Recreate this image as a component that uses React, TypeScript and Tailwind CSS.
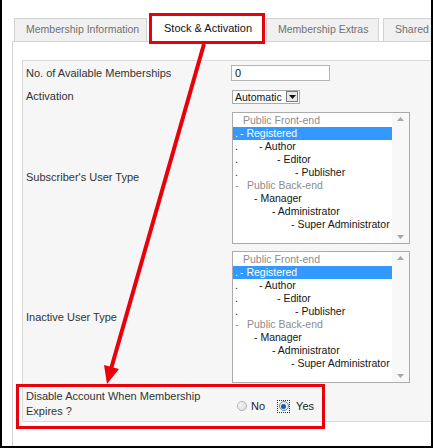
import React from "react";
import clsx from "clsx";

type Item = {
  pre?: string;
  text: string;
  pad: string;
  muted?: boolean;
  selected?: boolean;
};

const groups: Item[] = [
  { text: "Public Front-end", pad: "w-[10px]", muted: true },
  { pre: ".", text: "- Registered", pad: "w-[7px]", selected: true },
  { pre: ".", text: "- Author", pad: "w-[26px]" },
  { pre: ".", text: "- Editor", pad: "w-[44px]" },
  { pre: ".", text: "- Publisher", pad: "w-[62px]" },
  { pre: "-", text: "Public Back-end", pad: "w-[14px]", muted: true },
  { text: "- Manager", pad: "w-[21px]" },
  { text: "- Administrator", pad: "w-[39px]" },
  { text: "- Super Administrator", pad: "w-[58px]" },
];

const tabs = [
  { label: "Membership Information", cls: "w-[133px]" },
  { label: "Stock & Activation", cls: "ml-[2px] w-[116px]", active: true },
  { label: "Membership Extras", cls: "ml-[1px] w-[113px]" },
  { label: "Shared", cls: "ml-[4px] w-[70px]" },
];

function UserList() {
  return (
    <div className="ml-[1px] flex h-[132px] w-[178px] border border-[#ababab] bg-white">
      <div className="flex-1 pt-[1px] text-[10.5px] leading-[13px]">
        {groups.map((g) => (
          <div
            key={g.text}
            className={clsx(
              "flex h-[13px] whitespace-pre",
              g.selected
                ? "bg-[#3399ff] text-white"
                : g.muted
                ? "text-[#8c8c8c]"
                : "text-[#151515]"
            )}
          >
            <span className={clsx(g.pad, "shrink-0 pl-[2px]")}>{g.pre}</span>
            <span>{g.text}</span>
          </div>
        ))}
      </div>
      <div className="flex w-[17px] flex-col items-center justify-between bg-[#f8f8f8] py-[4px]">
        <svg width="7" height="4" viewBox="0 0 7 4">
          <path d="M0 4 L3.5 0 L7 4 Z" fill="#a8a8a8" />
        </svg>
        <svg width="7" height="4" viewBox="0 0 7 4">
          <path d="M0 0 L3.5 4 L7 0 Z" fill="#a8a8a8" />
        </svg>
      </div>
    </div>
  );
}

function Row({
  h,
  label,
  children,
}: {
  h: string;
  label: React.ReactNode;
  children: React.ReactNode;
}) {
  return (
    <div className={clsx("grid grid-cols-[208px_1fr] items-center", h)}>
      <div className="pl-[3px] text-[11px] leading-[15px] text-[#333]">
        {label}
      </div>
      <div className="flex items-center">{children}</div>
    </div>
  );
}

export default function App() {
  return (
    <div className="relative h-[448px] w-[433px] overflow-hidden border-b-2 border-l-2 border-r-2 border-black bg-white font-['Liberation_Sans',Arial,sans-serif]">
      <div className="flex h-full flex-col pl-[10px]">
        {/* tabs */}
        <div className="flex h-[41px] shrink-0 items-end pl-[2px]">
          {tabs.map((t) =>
            t.active ? (
              <div
                key={t.label}
                className={clsx(
                  "relative z-10 -mb-[3px] flex h-[31px] shrink-0 items-center border-[3px] border-[#e8000a] bg-white pl-[12px] text-[11px] text-[#111]",
                  t.cls
                )}
              >
                {t.label}
              </div>
            ) : (
              <div
                key={t.label}
                className={clsx(
                  "flex h-[23px] shrink-0 items-center border border-b-0 border-[#d2d2d2] bg-[#f0f0f0] pl-[11px] text-[10.5px] text-[#707070]",
                  t.cls
                )}
              >
                {t.label}
              </div>
            )
          )}
        </div>

        {/* panel */}
        <div className="flex-1 border-l border-t border-[#d2d2d2] bg-white pl-[9px] pt-[18px]">
          <div className="border-b border-l border-t border-[#d8d8d8] bg-[#f6f6f6]">
            <Row h="h-[24px]" label="No. of Available Memberships">
              <div className="flex h-[16px] w-[99px] items-center border border-[#b5b5b5] bg-white pl-[3px] text-[11px] text-[#111]">
                0
              </div>
            </Row>
            <Row h="h-[23px]" label="Activation">
              <div className="ml-[1px] flex h-[14px] w-[68px] items-center border border-[#ababab] bg-white">
                <span className="flex-1 pl-[2px] text-[10.5px] leading-[12px] text-[#111]">
                  Automatic
                </span>
                <span className="mr-[1px] flex h-[11px] w-[12px] items-center justify-center border border-[#7a7a7a] bg-[#e9e9e9]">
                  <svg width="7" height="4" viewBox="0 0 7 4">
                    <path d="M0 0 L3.5 4 L7 0 Z" fill="#111" />
                  </svg>
                </span>
              </div>
            </Row>
            <Row h="h-[139px]" label="Subscriber's User Type">
              <UserList />
            </Row>
            <Row h="h-[140px]" label="Inactive User Type">
              <UserList />
            </Row>
            <Row
              h="h-[34px]"
              label={
                <>
                  Disable Account When Membership
                  <br />
                  Expires ?
                </>
              }
            >
              <div className="ml-[6px] mt-[4px] flex items-center text-[11px] text-[#222]">
                <span className="h-[10px] w-[10px] rounded-full border border-[#b0b0b0] bg-gradient-to-br from-[#fafafa] to-[#dcdcdc]" />
                <span className="ml-[4px]">No</span>
                <span className="ml-[12px] flex h-[13px] w-[13px] items-center justify-center border border-dotted border-[#333]">
                  <span className="flex h-[10px] w-[10px] items-center justify-center rounded-full border border-[#6b8fb5] bg-[#e6eef7]">
                    <span className="h-[5px] w-[5px] rounded-full bg-[#1d5c99]" />
                  </span>
                </span>
                <span className="ml-[6px]">Yes</span>
              </div>
            </Row>
          </div>
        </div>
      </div>

      {/* annotation: box around the last row */}
      <div className="absolute left-[14px] top-[384px] h-[45px] w-[309px] border-[3px] border-[#e8000a]" />

      {/* annotation: arrow from tab to the row */}
      <svg
        className="pointer-events-none absolute left-[-2px] top-0"
        width="433"
        height="448"
        viewBox="0 0 433 448"
      >
        <line x1="204" y1="44" x2="111" y2="369" stroke="#e8000a" strokeWidth="4" />
        <polygon points="107,384 104,365 119,369" fill="#e8000a" />
      </svg>
    </div>
  );
}
